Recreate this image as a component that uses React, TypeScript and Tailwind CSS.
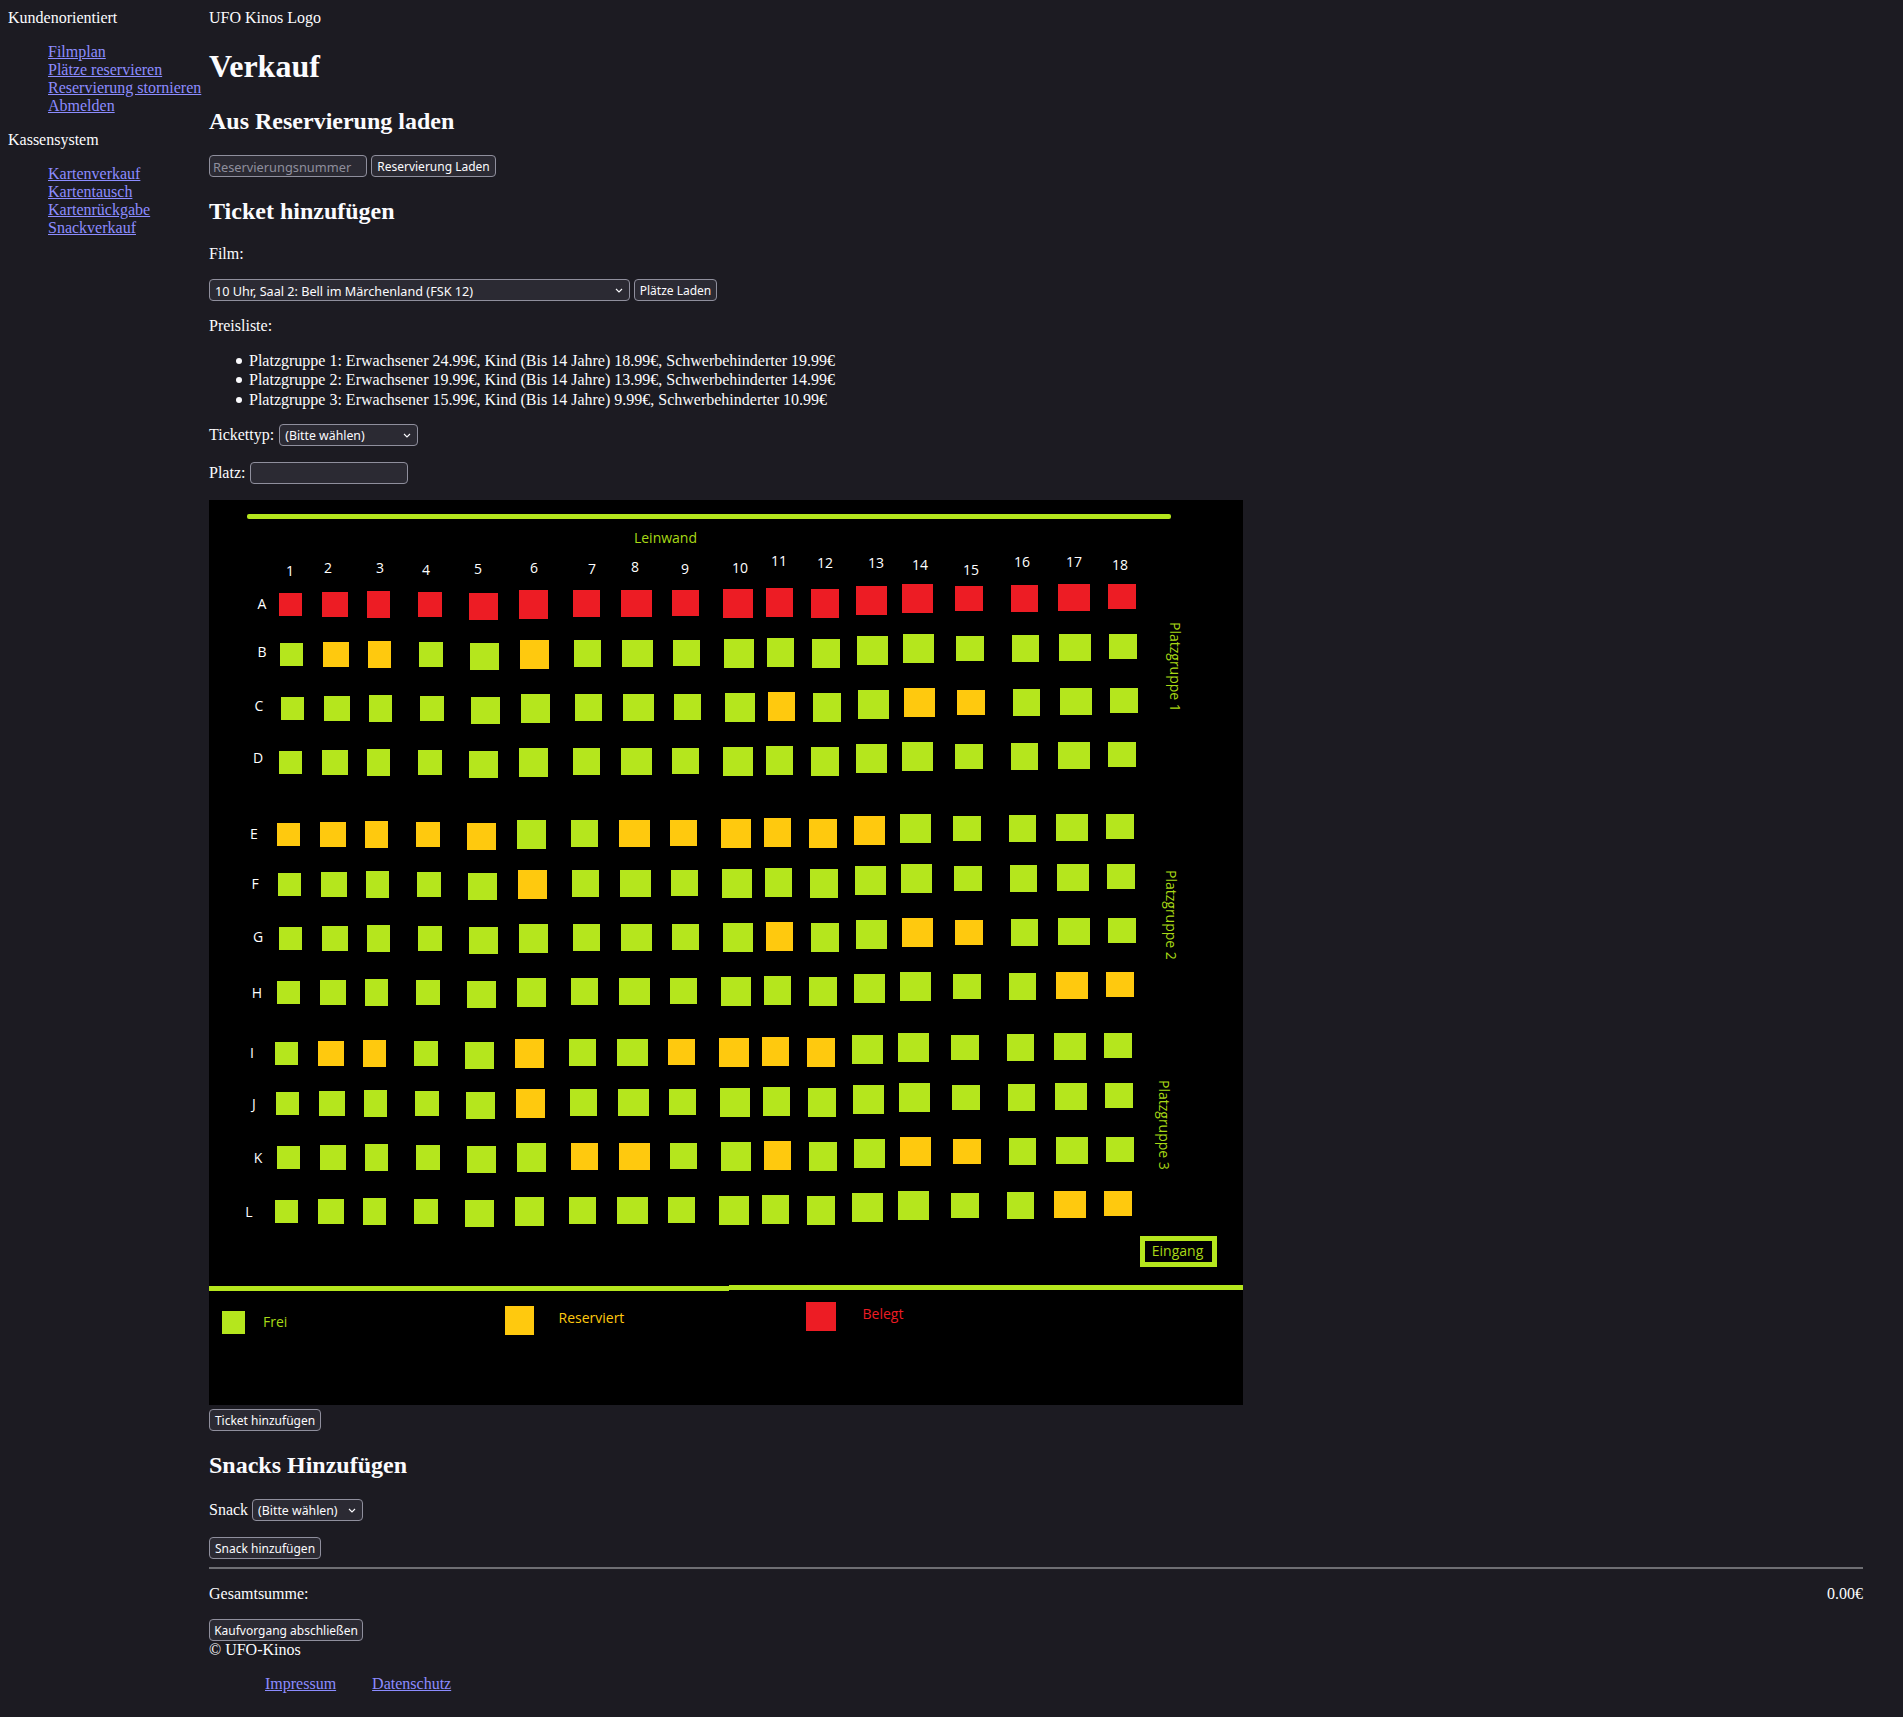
const CONTROL = "h-[22px] rounded-[4px] border border-[#8f8f9d] bg-[#2b2a33] pt-[2px] font-['Noto_Sans',sans-serif] text-[#fbfbfe]";
const LINK = 'text-[#8c8cff] underline';
const BULLET = "relative before:absolute before:top-[7px] before:left-[-13px] before:size-[6px] before:rounded-full before:bg-[#fbfbfe] before:content-['']";

type Seat = [number, number, number, number];

// x, y, w, h of each column, relative to the first seat of a row
const COLUMNS: Seat[] = [
  [0, 0, 23, 23],
  [43, -1, 26, 25],
  [88, -2, 23, 27],
  [139, -1, 24, 25],
  [190, 0, 29, 27],
  [240, -3, 29, 29],
  [294, -3, 27, 27],
  [342, -3, 31, 27],
  [393, -3, 27, 26],
  [444, -4, 30, 29],
  [487, -5, 27, 29],
  [532, -4, 28, 29],
  [577, -7, 31, 29],
  [623, -9, 31, 29],
  [676, -7, 28, 25],
  [732, -8, 27, 27],
  [779, -9, 32, 27],
  [829, -9, 28, 25],
];

// row start, label position and the reserved seat numbers
const ROWS: { name: string; x: number; y: number; lx: number; ly: number; yellow: number[]; red?: boolean }[] = [
  { name: 'A', x: 70, y: 93, lx: 53, ly: 109, yellow: [], red: true },
  { name: 'B', x: 71, y: 143, lx: 53, ly: 157, yellow: [2, 3, 6] },
  { name: 'C', x: 72, y: 197, lx: 50, ly: 211, yellow: [11, 14, 15] },
  { name: 'D', x: 70, y: 251, lx: 49, ly: 263, yellow: [] },
  { name: 'E', x: 68, y: 323, lx: 45, ly: 339, yellow: [1, 2, 3, 4, 5, 8, 9, 10, 11, 12, 13] },
  { name: 'F', x: 69, y: 373, lx: 46, ly: 389, yellow: [6] },
  { name: 'G', x: 70, y: 427, lx: 49, ly: 442, yellow: [11, 14, 15] },
  { name: 'H', x: 68, y: 481, lx: 48, ly: 498, yellow: [17, 18] },
  { name: 'I', x: 66, y: 542, lx: 43, ly: 558, yellow: [2, 3, 6, 9, 10, 11, 12] },
  { name: 'J', x: 67, y: 592, lx: 45, ly: 609, yellow: [6] },
  { name: 'K', x: 68, y: 646, lx: 49, ly: 663, yellow: [7, 8, 11, 14, 15] },
  { name: 'L', x: 66, y: 700, lx: 40, ly: 717, yellow: [17, 18] },
];

const NUMBERS: [number, number][] = [
  [81, 76], [119, 73], [171, 73], [217, 75], [269, 74], [325, 73], [383, 74], [426, 72], [476, 74],
  [531, 73], [570, 66], [616, 68], [667, 68], [711, 70], [762, 75], [813, 67], [865, 67], [911, 70],
];

const SeatMap = () => (
  <svg width="1034" height="905" viewBox="0 0 1034 905" className="mt-4 block bg-black font-['Open_Sans',sans-serif] text-[14px]">
    <rect x="38" y="14" width="924" height="5" rx="2" className="fill-[#b5e61d]" />
    <text x="456.5" y="43" textAnchor="middle" className="fill-[#a8d916]">Leinwand</text>

    {NUMBERS.map(([x, y], i) => (
      <text key={i} x={x} y={y} textAnchor="middle" className="fill-white">{i + 1}</text>
    ))}

    {ROWS.map(row => (
      <g key={row.name}>
        <text x={row.lx} y={row.ly} textAnchor="middle" className="fill-white">{row.name}</text>
        {COLUMNS.map(([x, y, w, h], i) => (
          <rect
            key={i}
            x={row.x + x}
            y={row.y + y}
            width={w}
            height={h}
            className={row.red ? 'fill-[#ed1c24]' : row.yellow.includes(i + 1) ? 'fill-[#ffc90e]' : 'fill-[#b5e61d]'}
          />
        ))}
      </g>
    ))}

    <text transform="translate(960.5 122) rotate(90)" className="fill-[#a8d916]">Platzgruppe 1</text>
    <text transform="translate(957 370) rotate(90)" className="fill-[#a8d916]">Platzgruppe 2</text>
    <text transform="translate(950 580) rotate(90)" className="fill-[#a8d916]">Platzgruppe 3</text>

    <rect x="933.5" y="738.5" width="72" height="26" strokeWidth="5" className="fill-black stroke-[#b5e61d]" />
    <text x="968.5" y="756" textAnchor="middle" className="fill-[#a8d916]">Eingang</text>

    <rect x="0" y="786" width="520" height="5" className="fill-[#b5e61d]" />
    <rect x="520" y="785" width="514" height="5" className="fill-[#b5e61d]" />

    <rect x="13" y="811" width="23" height="23" className="fill-[#b5e61d]" />
    <text x="54" y="827" className="fill-[#a8d916]">Frei</text>
    <rect x="296" y="806" width="29" height="29" className="fill-[#ffc90e]" />
    <text x="349.5" y="823" className="fill-[#ffc90e]">Reserviert</text>
    <rect x="597" y="802" width="30" height="29" className="fill-[#ed1c24]" />
    <text x="653.5" y="819" className="fill-[#ed1c24]">Belegt</text>
  </svg>
);

const Select = ({ label, width, size = 'text-[12.3px]' }: { label: string; width: string; size?: string }) => (
  <span className={`relative inline-block ${width}`}>
    <select className={`${CONTROL} ${size} block w-full appearance-none pl-[5px]`}>
      <option>{label}</option>
    </select>
    <svg width="8" height="5" viewBox="0 0 8 5" className="pointer-events-none absolute top-[9px] right-[7px]">
      <path d="M1 1l3 3 3-3" fill="none" stroke="#fbfbfe" strokeWidth="1.1" />
    </svg>
  </span>
);

const Button = ({ label, width }: { label: string; width: string }) => (
  <button className={`${CONTROL} ${width} block text-center text-[12px]`}>{label}</button>
);

const NavList = ({ items }: { items: string[] }) => (
  <ul className="my-4 pl-10">
    {items.map(item => (
      <li key={item}>
        <a href="#" className={LINK}>{item}</a>
      </li>
    ))}
  </ul>
);

export default function App() {
  return (
    <div className="flex min-h-[1717px] bg-[#1c1b22] pt-[9px] font-['Liberation_Serif',serif] text-[16px] leading-[18.4px] text-[#fbfbfe]">
      <aside className="w-[209px] shrink-0 pl-2 leading-[18px]">
        <p>Kundenorientiert</p>
        <NavList items={['Filmplan', 'Plätze reservieren', 'Reservierung stornieren', 'Abmelden']} />
        <p>Kassensystem</p>
        <NavList items={['Kartenverkauf', 'Kartentausch', 'Kartenrückgabe', 'Snackverkauf']} />
      </aside>

      <main className="w-[1654px]">
        <p>UFO Kinos Logo</p>
        <h1 className="mt-[20.44px] text-[32px] leading-[36.8px] font-bold">Verkauf</h1>

        <h2 className="mt-[23px] text-[24px] leading-[27.6px] font-bold">Aus Reservierung laden</h2>
        <div className="mt-[19.76px] flex gap-[4px]">
          <input placeholder="Reservierungsnummer" className={`${CONTROL} w-[158px] px-[3px] text-[12.8px] placeholder:text-[#8f8f9d]`} />
          <Button label="Reservierung Laden" width="w-[125px]" />
        </div>

        <h2 className="mt-[21px] text-[24px] leading-[27.6px] font-bold">Ticket hinzufügen</h2>
        <p className="mt-[18.95px]">Film:</p>
        <div className="mt-[16.05px] flex gap-[4px]">
          <Select label="10 Uhr, Saal 2: Bell im Märchenland (FSK 12)" width="w-[421px]" size="text-[12.65px]" />
          <Button label="Plätze Laden" width="w-[83px]" />
        </div>

        <p className="mt-[15.6px]">Preisliste:</p>
        <ul className="mt-4 pl-10 leading-[19.5px]">
          <li className={BULLET}>Platzgruppe 1: Erwachsener 24.99€, Kind (Bis 14 Jahre) 18.99€, Schwerbehinderter 19.99€</li>
          <li className={BULLET}>Platzgruppe 2: Erwachsener 19.99€, Kind (Bis 14 Jahre) 13.99€, Schwerbehinderter 14.99€</li>
          <li className={BULLET}>Platzgruppe 3: Erwachsener 15.99€, Kind (Bis 14 Jahre) 9.99€, Schwerbehinderter 10.99€</li>
        </ul>

        <div className="mt-[14.5px] flex items-center gap-[5px]">
          <label>Tickettyp:</label>
          <Select label="(Bitte wählen)" width="w-[139px]" />
        </div>
        <div className="mt-4 flex items-center gap-[5px]">
          <label>Platz:</label>
          <input className={`${CONTROL} w-[158px] px-[3px] text-[12.8px]`} />
        </div>

        <SeatMap />

        <div className="mt-1">
          <Button label="Ticket hinzufügen" width="w-[112px]" />
        </div>

        <h2 className="mt-[21px] text-[24px] leading-[27.6px] font-bold">Snacks Hinzufügen</h2>
        <div className="mt-[19.4px] flex items-center gap-[4px]">
          <label>Snack</label>
          <Select label="(Bitte wählen)" width="w-[111px]" />
        </div>
        <div className="mt-4">
          <Button label="Snack hinzufügen" width="w-[112px]" />
        </div>

        <hr className="mt-2 h-[2px] border-0 bg-[#6e6e73]" />
        <div className="mt-4 flex justify-between">
          <span>Gesamtsumme:</span>
          <span>0.00€</span>
        </div>
        <div className="mt-4">
          <Button label="Kaufvorgang abschließen" width="w-[154px]" />
        </div>

        <p>© UFO-Kinos</p>
        <ul className="mt-[15px] flex gap-9 pl-14">
          <li><a href="#" className={LINK}>Impressum</a></li>
          <li><a href="#" className={LINK}>Datenschutz</a></li>
        </ul>
      </main>
    </div>
  );
}
